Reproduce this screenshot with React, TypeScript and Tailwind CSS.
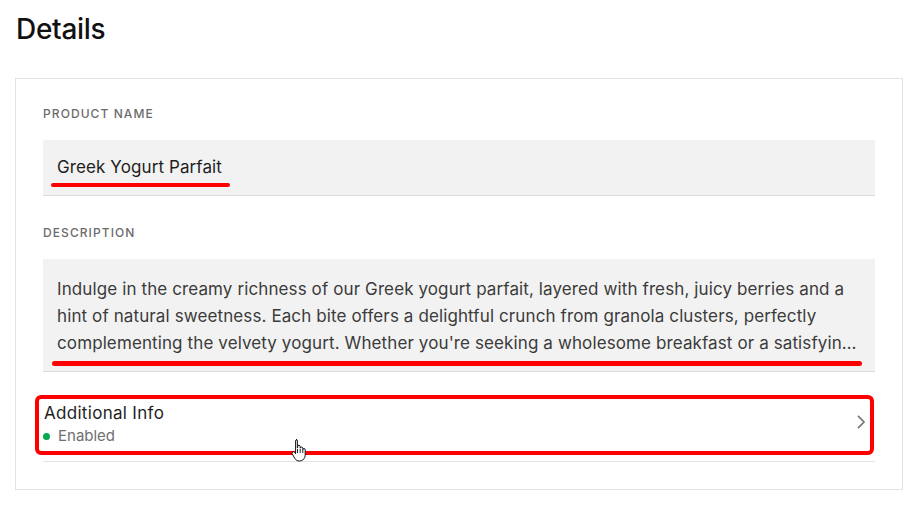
import React from "react";

function HandCursor() {
  return (
    <svg width="16" height="24" viewBox="0 0 16 24" className="absolute left-[291px] top-[438px]">
      <path
        d="M5 1.5c.8 0 1.4.6 1.4 1.4V10l.2-.1V8.6c0-.8.6-1.3 1.3-1.3s1.3.5 1.3 1.3v1.6c0-.7.6-1.2 1.3-1.2s1.3.5 1.3 1.2v1.4c0-.6.5-1.1 1.2-1.1.7 0 1.2.5 1.2 1.2v5.4c0 3.3-2.4 5.9-5.6 5.9H8.1c-1.8 0-3.2-.9-4.2-2.4L1.3 16c-.5-.8-.3-1.7.4-2.1.7-.4 1.5-.2 2 .5l.9 1.3V2.9c0-.8.6-1.4 1.4-1.4z"
        fill="#fff"
        stroke="#111"
        strokeWidth="1"
        strokeLinejoin="round"
      />
      <path d="M6.5 11v4M9.2 11v4M11.8 11.5v3.5" stroke="#111" strokeWidth="0.9" />
    </svg>
  );
}

export default function App() {
  return (
    <div
      className="relative w-[915px] h-[505px] bg-white overflow-hidden"
      style={{ fontFamily: "Inter, 'Noto Sans', sans-serif" }}
    >
      <div className="pl-4 pt-[11px]">
        <h1 className="text-[28px] leading-[36px] font-medium text-[#111] tracking-[-0.3px]">Details</h1>
      </div>

      <div className="ml-[15px] mt-[31px] w-[888px] h-[412px] border border-[#e3e3e3] px-[27px] pt-[27px]">
        <div className="text-[12px] leading-[16px] font-medium tracking-[0.09em] text-[#6b6b6b]">PRODUCT NAME</div>
        <div className="relative mt-[18px] h-[56px] bg-[#f2f2f2] border-b border-[#dcdcdc] flex items-center px-[14px]">
          <span className="text-[17px] leading-[27px] tracking-[0.1px] text-[#1e1e1e]">Greek Yogurt Parfait</span>
          <div className="absolute left-[8px] top-[43px] w-[179px] h-[4px] rounded-full bg-[#ff0000]" />
        </div>

        <div className="mt-[29px] text-[12px] leading-[16px] font-medium tracking-[0.09em] text-[#6b6b6b]">DESCRIPTION</div>
        <div className="relative mt-[18px] h-[113px] bg-[#f2f2f2] border-b border-[#dcdcdc] px-[14px] pt-[17px]">
          <p className="text-[17px] leading-[27px] tracking-[0.11px] text-[#3b3b3b] whitespace-nowrap">
            <span className="block">Indulge in the creamy richness of our Greek yogurt parfait, layered with fresh, juicy berries and a</span>
            <span className="block">hint of natural sweetness. Each bite offers a delightful crunch from granola clusters, perfectly</span>
            <span className="block">complementing the velvety yogurt. Whether you're seeking a wholesome breakfast or a satisfyin…</span>
          </p>
          <div className="absolute left-[9px] top-[102px] w-[810px] h-[5px] rounded-full bg-[#ff0000]" />
        </div>

        <div className="relative mt-[16px] flex items-center border-b border-[#e3e3e3] pt-[13px] pb-[14px]">
          <div className="flex-1">
            <div className="pl-px text-[17px] leading-[24px] tracking-[0.3px] text-[#1e1e1e]">Additional Info</div>
            <div className="flex items-center gap-[8px] text-[15px] leading-[22px] text-[#6f6f6f]">
              <span className="w-[7px] h-[7px] rounded-full bg-[#00a84f]" />
              <span>Enabled</span>
            </div>
          </div>
          <svg width="12" height="16" viewBox="0 0 12 16" className="mr-[8px] mb-[4px]">
            <path d="M3 1.8 L9 8 L3 14.2" fill="none" stroke="#777" strokeWidth="1.7" />
          </svg>
          <div className="absolute left-[-8px] right-[1px] top-[7px] h-[60px] border-[4px] border-[#ff0000] rounded-[6px]" />
        </div>
      </div>

      <HandCursor />
    </div>
  );
}
